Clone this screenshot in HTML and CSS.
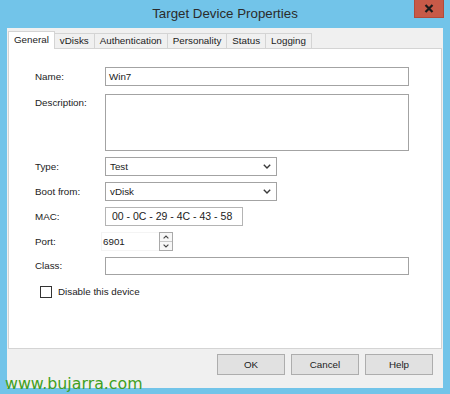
FILE: index.html
```html
<!DOCTYPE html>
<html>
<head>
<meta charset="utf-8">
<link rel="stylesheet" href="styles.css">
</head>
<body>
<div class="window">
  <div class="titlebar">
    <span class="title">Target Device Properties</span>
    <div class="close"><svg width="10" height="9" viewBox="0 0 10 9"><path d="M1.5 1 L8.5 8 M8.5 1 L1.5 8" stroke="#1a1a1a" stroke-width="2.2" fill="none"/></svg></div>
  </div>
  <div class="client">
    <div class="tabs">
      <div class="tab active">General</div>
      <div class="tab">vDisks</div>
      <div class="tab">Authentication</div>
      <div class="tab">Personality</div>
      <div class="tab">Status</div>
      <div class="tab">Logging</div>
    </div>
    <div class="panel">
      <div class="form">
        <div class="label">Name:</div>
        <div class="field wide h19"><span class="val">Win7</span></div>

        <div class="label top desc-row">Description:</div>
        <div class="field wide area desc-row"></div>

        <div class="label">Type:</div>
        <div class="field combo h19"><span class="val">Test</span><svg class="chev" width="8" height="5" viewBox="0 0 8 5"><path d="M0.8 0.8 L4 4 L7.2 0.8" stroke="#3a3a3a" stroke-width="1.4" fill="none"/></svg></div>

        <div class="label">Boot from:</div>
        <div class="field combo h19"><span class="val">vDisk</span><svg class="chev" width="8" height="5" viewBox="0 0 8 5"><path d="M0.8 0.8 L4 4 L7.2 0.8" stroke="#3a3a3a" stroke-width="1.4" fill="none"/></svg></div>

        <div class="label">MAC:</div>
        <div class="field mac h19"><span class="val">00 - 0C - 29 - 4C - 43 - 58</span></div>

        <div class="label">Port:</div>
        <div class="port">
          <div class="port-box"><span class="val">6901</span></div>
          <div class="spin">
            <div class="spin-btn"><svg width="6" height="4" viewBox="0 0 6 4"><path d="M0.6 3.4 L3 1 L5.4 3.4" stroke="#444" stroke-width="1.1" fill="none"/></svg></div>
            <div class="spin-btn"><svg width="6" height="4" viewBox="0 0 6 4"><path d="M0.6 0.6 L3 3 L5.4 0.6" stroke="#444" stroke-width="1.1" fill="none"/></svg></div>
          </div>
        </div>

        <div class="label">Class:</div>
        <div class="field wide h18"></div>
      </div>
      <div class="check-row">
        <span class="checkbox"></span>
        <span class="check-label">Disable this device</span>
      </div>
    </div>
    <div class="buttons">
      <div class="btn">OK</div>
      <div class="btn">Cancel</div>
      <div class="btn">Help</div>
    </div>
  </div>
  <div class="watermark">www.bujarra.com</div>
</div>
</body>
</html>
```

FILE: styles.css
```css
* { box-sizing: border-box; }
html, body { margin: 0; padding: 0; }
body {
  width: 450px;
  height: 394px;
  overflow: hidden;
  font-family: "Liberation Sans", Arial, sans-serif;
  font-size: 9.8px;
  color: #222222;
}
.window {
  position: relative;
  width: 450px;
  height: 394px;
  background: #72c4e9;
  display: flex;
  flex-direction: column;
}
.titlebar {
  position: relative;
  height: 28px;
  display: flex;
  align-items: center;
  justify-content: center;
}
.title {
  font-size: 13.3px;
  color: #2b2b2b;
  margin-top: -2px;
}
.close {
  position: absolute;
  top: 0;
  right: 6px;
  width: 30px;
  height: 18px;
  background: #c75a48;
  border: 1px solid #b24a3a;
  border-top: none;
  display: flex;
  align-items: center;
  justify-content: center;
}
.client {
  margin: 0 7px;
  height: 360px;
  background: #f0f0f0;
  padding: 3px 1px 0 1px;
  display: flex;
  flex-direction: column;
}
.tabs {
  display: flex;
  align-items: flex-end;
  height: 17px;
}
.tab {
  height: 15px;
  padding: 0 5px;
  border: 1px solid #d4d4d4;
  border-bottom: none;
  border-left: none;
  background: #f0f0f0;
  display: flex;
  align-items: center;
  line-height: 1;
  color: #222222;
}
.tab.active {
  height: 18px;
  margin-bottom: -1px;
  background: #ffffff;
  border-left: 1px solid #d4d4d4;
  padding: 0 5px 2px 5px;
  position: relative;
  z-index: 1;
}
.panel {
  height: 301px;
  background: #ffffff;
  border: 1px solid #d4d4d4;
  padding: 18px 0 0 26px;
}
.form {
  display: grid;
  grid-template-columns: 70px auto;
  row-gap: 6px;
  justify-content: start;
  align-items: center;
}
.label {
  line-height: 1;
  color: #222222;
}
.label.top {
  align-self: start;
  padding-top: 4px;
}
.desc-row { margin-top: 2px; }
.field {
  background: #ffffff;
  border: 1px solid #a3a3a3;
  display: flex;
  align-items: center;
  padding-left: 3px;
  position: relative;
}
.val { line-height: 1; color: #222222; }
.h19 { height: 19px; }
.h18 { height: 18px; }
.wide { width: 304px; }
.area { height: 57px; }
.combo {
  width: 172px;
  padding-left: 4px;
  justify-content: space-between;
  padding-right: 5px;
}
.mac {
  width: 138px;
  padding-left: 6px;
  border-color: #b4b4b4;
}
.mac .val { font-size: 10.5px; }
.port {
  display: flex;
  height: 19px;
}
.port-box {
  width: 58px;
  margin-left: -4px;
  display: flex;
  align-items: center;
  padding-left: 1px;
  border: 1px solid #f4f4f4;
  border-right: none;
}
.spin {
  width: 14px;
  height: 19px;
  border: 1px solid #a9a9a9;
  display: flex;
  flex-direction: column;
  background: #f7f7f7;
}
.spin-btn {
  flex: 1;
  display: flex;
  align-items: center;
  justify-content: center;
}
.spin-btn + .spin-btn { border-top: 1px solid #c8c8c8; }
.check-row {
  display: flex;
  align-items: center;
  margin-top: 11px;
  margin-left: 5px;
  gap: 6px;
}
.checkbox {
  width: 12px;
  height: 12px;
  border: 1px solid #333333;
  background: #ffffff;
}
.check-label { line-height: 1; }
.buttons {
  display: flex;
  justify-content: flex-end;
  gap: 6px;
  margin-top: 5px;
  padding-right: 9px;
}
.btn {
  width: 68px;
  height: 21px;
  background: #e1e1e1;
  border: 1px solid #adadad;
  display: flex;
  align-items: center;
  justify-content: center;
  line-height: 1;
  color: #222222;
}
.watermark {
  position: absolute;
  left: 5px;
  bottom: 2px;
  font-family: "DejaVu Sans", Verdana, sans-serif;
  font-size: 15.8px;
  color: #3f9f22;
  line-height: 1;
}
```
